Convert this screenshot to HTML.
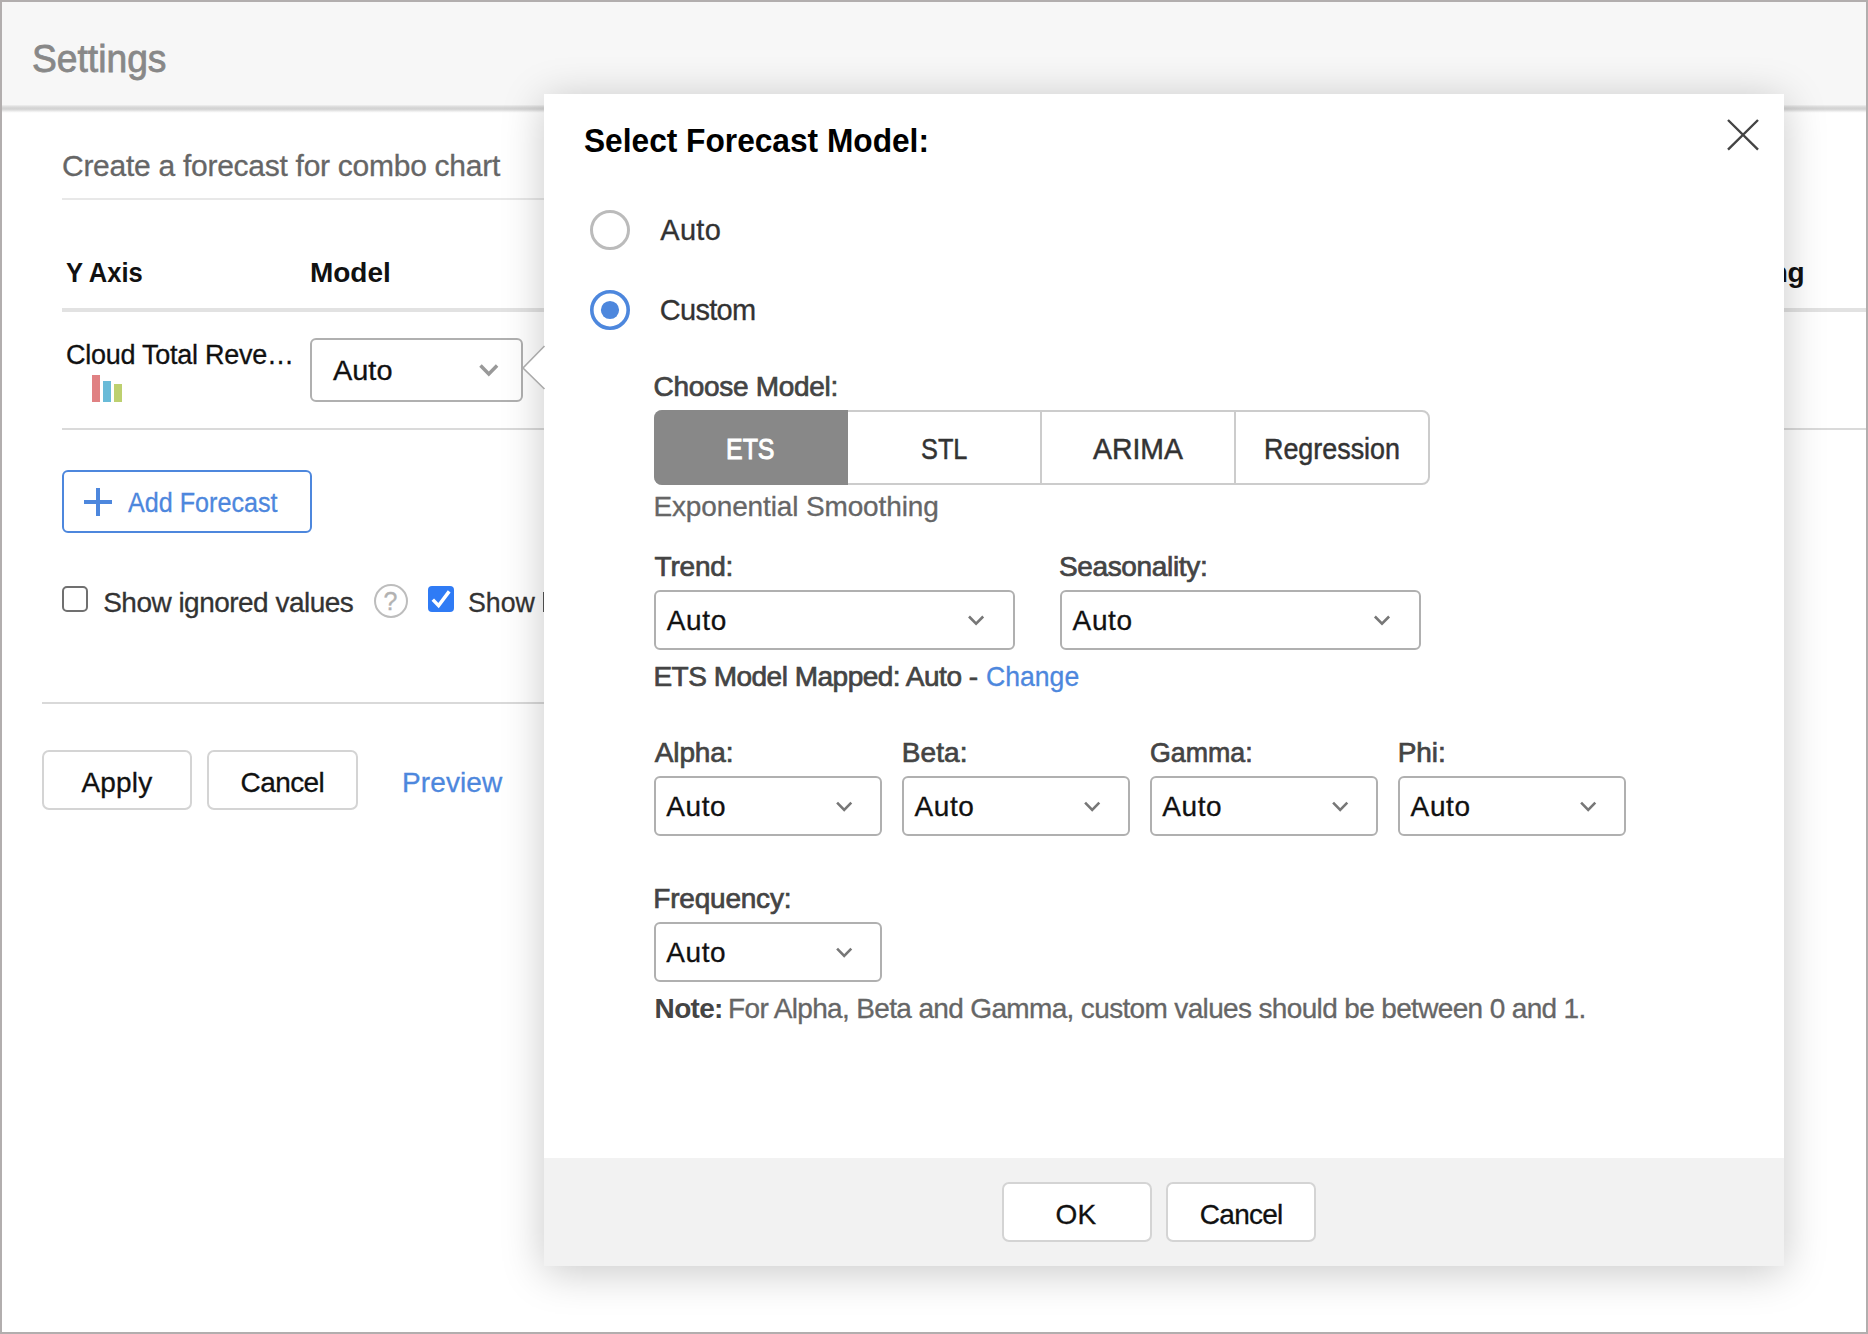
<!DOCTYPE html>
<html><head><meta charset="utf-8"><title>Settings - Select Forecast Model</title>
<style>
html,body{margin:0;padding:0;width:1868px;height:1334px;overflow:hidden;background:#fff}
body{position:relative;font-family:"Liberation Sans",sans-serif}
.b{position:absolute;display:block}
.t{position:absolute;white-space:nowrap;font-family:"Liberation Sans",sans-serif}
</style></head><body>
<div id="settings">
<div class="b" style="left:0px;top:0px;width:1868px;height:1334px;border:2px solid #b2aeae;box-sizing:border-box;background:#fff"></div>
<div class="b" style="left:2px;top:2px;width:1864px;height:104px;background:#f7f7f7"></div>
<div class="b" style="left:2px;top:105px;width:1864px;height:8px;background:linear-gradient(#f0f0f0 0%,#d9d9d9 25%,#d2d2d2 50%,#e6e6e6 72%,#f8f8f8 88%,#ffffff 100%)"></div>
<div class="b" style="left:62px;top:198px;width:1600px;height:2px;background:#e8e8e8"></div>
<div class="b" style="left:62px;top:308px;width:1804px;height:4px;background:#e2e2e2"></div>
<div class="b" style="left:62px;top:428px;width:1804px;height:2px;background:#dadada"></div>
<div class="b" style="left:42px;top:702px;width:1740px;height:2px;background:#d9d9d9"></div>
<div class="b" style="left:92px;top:375px;width:8px;height:27px;background:#e08183"></div>
<div class="b" style="left:103px;top:381px;width:8px;height:21px;background:#69bbd8"></div>
<div class="b" style="left:114px;top:384px;width:8px;height:18px;background:#bdd06f"></div>
<div class="b" style="left:310px;top:338px;width:213px;height:64px;border:2px solid #b0b0b0;border-radius:6px;background:#fff;box-sizing:border-box"></div>
<svg class="b" style="left:475px;top:360px" width="29" height="21"><polyline points="5.50,5.60 13.80,14.00 22.10,5.60" fill="none" stroke="#999" stroke-width="3.5" stroke-linecap="butt" stroke-linejoin="miter"/></svg>
<div class="b" style="left:62px;top:470px;width:250px;height:63px;border:2px solid #4d87dd;border-radius:6px;background:#fff;box-sizing:border-box"></div>
<div class="b" style="left:84px;top:500px;width:28px;height:4px;background:#4d87dd"></div>
<div class="b" style="left:96px;top:488px;width:4px;height:28px;background:#4d87dd"></div>
<div class="b" style="left:62px;top:586px;width:26px;height:26px;border:2px solid #707070;border-radius:5px;box-sizing:border-box"></div>
<div class="b" style="left:374px;top:584px;width:34px;height:34px;border:2px solid #bdbdbd;border-radius:50%;box-sizing:border-box"></div>
<div class="t" style="left:383.5px;top:589px;font-size:25px;line-height:25px;color:#b2b2b2;-webkit-text-stroke:0.3px #b2b2b2">?</div>
<div class="b" style="left:428px;top:586px;width:26px;height:26px;background:#2f7bf5;border-radius:4px"></div>
<svg class="b" style="left:428px;top:586px" width="26" height="26"><polyline points="4.8,13.6 10.6,19.6 21.2,5.4" fill="none" stroke="#fff" stroke-width="3.5"/></svg>
<div class="b" style="left:542.6px;top:591.5px;width:1.8px;height:20.2px;background:#555"></div>
<div class="b" style="left:42px;top:750px;width:150px;height:60px;border:2px solid #d4d4d4;border-radius:7px;background:#fff;box-sizing:border-box"></div>
<div class="b" style="left:207px;top:750px;width:151px;height:60px;border:2px solid #d4d4d4;border-radius:7px;background:#fff;box-sizing:border-box"></div>
<div class="t" style="left:32.0px;top:39.0px;font-size:39px;line-height:39px;color:#888888;transform:scaleX(0.9540);transform-origin:0 0;-webkit-text-stroke:0.8px #888888">Settings</div>
<div class="t" style="left:62.0px;top:151.0px;font-size:30px;line-height:30px;color:#666;letter-spacing:-0.27px;-webkit-text-stroke:0.3px #666">Create a forecast for combo chart</div>
<div class="t" style="left:66.4px;top:259.0px;font-size:28px;line-height:28px;color:#111;font-weight:700;transform:scaleX(0.9126);transform-origin:0 0">Y Axis</div>
<div class="t" style="left:310.0px;top:259.0px;font-size:28px;line-height:28px;color:#111;font-weight:700;letter-spacing:-0.03px">Model</div>
<div class="t" style="left:1707.9px;top:259.0px;font-size:28px;line-height:28px;color:#111;font-weight:700;letter-spacing:-0.40px">Trailing</div>
<div class="t" style="left:66.0px;top:342.0px;font-size:27px;line-height:27px;color:#111;letter-spacing:-0.25px;-webkit-text-stroke:0.3px #111">Cloud Total Reve…</div>
<div class="t" style="left:332.6px;top:357.5px;font-size:27px;line-height:27px;color:#111;transform:scaleX(1.0710);transform-origin:0 0;-webkit-text-stroke:0.3px #111">Auto</div>
<div class="t" style="left:128.0px;top:490.2px;font-size:27px;line-height:27px;color:#4d87dd;transform:scaleX(0.9312);transform-origin:0 0;-webkit-text-stroke:0.3px #4d87dd">Add Forecast</div>
<div class="t" style="left:103.2px;top:589.0px;font-size:28px;line-height:28px;color:#333;letter-spacing:-0.52px;-webkit-text-stroke:0.3px #333">Show ignored values</div>
<div class="t" style="left:468.0px;top:589.0px;font-size:28px;line-height:28px;color:#333;transform:scaleX(0.9553);transform-origin:0 0;-webkit-text-stroke:0.3px #333">Show</div>
<div class="t" style="left:81.4px;top:769.0px;font-size:28px;line-height:28px;color:#111;letter-spacing:0.21px;-webkit-text-stroke:0.3px #111">Apply</div>
<div class="t" style="left:240.5px;top:769.0px;font-size:28px;line-height:28px;color:#111;letter-spacing:-0.57px;-webkit-text-stroke:0.3px #111">Cancel</div>
<div class="t" style="left:402.0px;top:769.0px;font-size:28px;line-height:28px;color:#4d87dd;letter-spacing:0.11px;-webkit-text-stroke:0.3px #4d87dd">Preview</div>
</div>
<div id="dialog">
<div class="b" style="left:544px;top:94px;width:1240px;height:1172px;background:#fff;box-shadow:0 6px 40px rgba(0,0,0,0.22)"></div>
<div class="b" style="left:544px;top:1158px;width:1240px;height:108px;background:#f2f2f2"></div>
<svg class="b" style="left:520px;top:342px" width="26" height="52"><polygon points="24.5,4 3,26 24.5,47 27,47 27,4" fill="#fff"/><polyline points="24.5,4 3,26 24.5,47" fill="none" stroke="#aaa" stroke-width="1.6"/></svg>
<svg class="b" style="left:1720px;top:112px" width="46" height="46"><path d="M8,8 L38,37.6 M38,8 L8,37.6" stroke="#444" stroke-width="2.4" fill="none"/></svg>
<svg class="b" style="left:586px;top:206px" width="48" height="128"><circle cx="24" cy="24" r="18.5" fill="#fff" stroke="#bbb" stroke-width="3"/><circle cx="24" cy="104" r="18.2" fill="#fff" stroke="#4d87dd" stroke-width="3.6"/><circle cx="24" cy="104" r="9.1" fill="#4d87dd"/></svg>
<div class="b" style="left:654px;top:410px;width:776px;height:75px;border:2px solid #ccc;border-radius:8px;box-sizing:border-box;background:#fff"></div>
<div class="b" style="left:654px;top:410px;width:194px;height:75px;background:#888;border-radius:8px 0 0 8px"></div>
<div class="b" style="left:1040px;top:410px;width:2px;height:75px;background:#ccc"></div>
<div class="b" style="left:1234px;top:410px;width:2px;height:75px;background:#ccc"></div>
<div class="b" style="left:654px;top:590px;width:361px;height:60px;border:2px solid #b0b0b0;border-radius:6px;background:#fff;box-sizing:border-box"></div>
<svg class="b" style="left:964px;top:611px" width="27" height="20"><polyline points="5.00,5.50 12.10,12.60 19.20,5.50" fill="none" stroke="#777" stroke-width="2.6" stroke-linecap="butt" stroke-linejoin="miter"/></svg>
<div class="b" style="left:1060px;top:590px;width:361px;height:60px;border:2px solid #b0b0b0;border-radius:6px;background:#fff;box-sizing:border-box"></div>
<svg class="b" style="left:1369px;top:611px" width="27" height="20"><polyline points="5.90,5.50 13.00,12.60 20.10,5.50" fill="none" stroke="#777" stroke-width="2.6" stroke-linecap="butt" stroke-linejoin="miter"/></svg>
<div class="b" style="left:654px;top:776px;width:228px;height:60px;border:2px solid #b0b0b0;border-radius:6px;background:#fff;box-sizing:border-box"></div>
<svg class="b" style="left:832px;top:797px" width="27" height="20"><polyline points="5.10,5.70 12.20,12.80 19.30,5.70" fill="none" stroke="#777" stroke-width="2.6" stroke-linecap="butt" stroke-linejoin="miter"/></svg>
<div class="b" style="left:902px;top:776px;width:228px;height:60px;border:2px solid #b0b0b0;border-radius:6px;background:#fff;box-sizing:border-box"></div>
<svg class="b" style="left:1080px;top:797px" width="27" height="20"><polyline points="5.10,5.70 12.20,12.80 19.30,5.70" fill="none" stroke="#777" stroke-width="2.6" stroke-linecap="butt" stroke-linejoin="miter"/></svg>
<div class="b" style="left:1150px;top:776px;width:228px;height:60px;border:2px solid #b0b0b0;border-radius:6px;background:#fff;box-sizing:border-box"></div>
<svg class="b" style="left:1328px;top:797px" width="27" height="20"><polyline points="5.10,5.70 12.20,12.80 19.30,5.70" fill="none" stroke="#777" stroke-width="2.6" stroke-linecap="butt" stroke-linejoin="miter"/></svg>
<div class="b" style="left:1398px;top:776px;width:228px;height:60px;border:2px solid #b0b0b0;border-radius:6px;background:#fff;box-sizing:border-box"></div>
<svg class="b" style="left:1576px;top:797px" width="27" height="20"><polyline points="5.10,5.70 12.20,12.80 19.30,5.70" fill="none" stroke="#777" stroke-width="2.6" stroke-linecap="butt" stroke-linejoin="miter"/></svg>
<div class="b" style="left:654px;top:922px;width:228px;height:60px;border:2px solid #b0b0b0;border-radius:6px;background:#fff;box-sizing:border-box"></div>
<svg class="b" style="left:832px;top:943px" width="27" height="20"><polyline points="5.10,5.70 12.20,12.80 19.30,5.70" fill="none" stroke="#777" stroke-width="2.6" stroke-linecap="butt" stroke-linejoin="miter"/></svg>
<div class="b" style="left:1002px;top:1182px;width:150px;height:60px;border:2px solid #d4d4d4;border-radius:7px;background:#fff;box-sizing:border-box"></div>
<div class="b" style="left:1166px;top:1182px;width:150px;height:60px;border:2px solid #d4d4d4;border-radius:7px;background:#fff;box-sizing:border-box"></div>
<div class="t" style="left:584.2px;top:123.0px;font-size:34px;line-height:34px;color:#000;font-weight:700;transform:scaleX(0.9315);transform-origin:0 0">Select Forecast Model:</div>
<div class="t" style="left:660.3px;top:216.0px;font-size:29px;line-height:29px;color:#333;letter-spacing:0.29px;-webkit-text-stroke:0.3px #333">Auto</div>
<div class="t" style="left:659.8px;top:296.0px;font-size:29px;line-height:29px;color:#333;letter-spacing:-0.71px;-webkit-text-stroke:0.3px #333">Custom</div>
<div class="t" style="left:653.6px;top:373.0px;font-size:28px;line-height:28px;color:#444;letter-spacing:-0.30px;-webkit-text-stroke:0.7px #444">Choose Model:</div>
<div class="t" style="left:725.7px;top:433.5px;font-size:30px;line-height:30px;color:#fff;transform:scaleX(0.8313);transform-origin:0 0;-webkit-text-stroke:1.0px #fff">ETS</div>
<div class="t" style="left:920.8px;top:433.5px;font-size:30px;line-height:30px;color:#333;transform:scaleX(0.8437);transform-origin:0 0;-webkit-text-stroke:0.5px #333">STL</div>
<div class="t" style="left:1093.2px;top:433.5px;font-size:30px;line-height:30px;color:#333;transform:scaleX(0.9453);transform-origin:0 0;-webkit-text-stroke:0.5px #333">ARIMA</div>
<div class="t" style="left:1264.2px;top:433.5px;font-size:30px;line-height:30px;color:#333;transform:scaleX(0.8963);transform-origin:0 0;-webkit-text-stroke:0.5px #333">Regression</div>
<div class="t" style="left:653.4px;top:493.0px;font-size:28px;line-height:28px;color:#666;letter-spacing:-0.13px;-webkit-text-stroke:0.3px #666">Exponential Smoothing</div>
<div class="t" style="left:654.6px;top:553.4px;font-size:28px;line-height:28px;color:#444;letter-spacing:-0.22px;-webkit-text-stroke:0.7px #444">Trend:</div>
<div class="t" style="left:1058.9px;top:553.4px;font-size:28px;line-height:28px;color:#444;letter-spacing:-0.34px;-webkit-text-stroke:0.7px #444">Seasonality:</div>
<div class="t" style="left:666.8px;top:606.5px;font-size:28px;line-height:28px;color:#111;letter-spacing:0.62px;-webkit-text-stroke:0.3px #111">Auto</div>
<div class="t" style="left:1072.6px;top:606.5px;font-size:28px;line-height:28px;color:#111;letter-spacing:0.62px;-webkit-text-stroke:0.3px #111">Auto</div>
<div class="t" style="left:653.4px;top:662.6px;font-size:28px;line-height:28px;color:#444;letter-spacing:-0.50px;-webkit-text-stroke:0.7px #444">ETS Model Mapped: Auto -</div>
<div class="t" style="left:986.0px;top:662.6px;font-size:28px;line-height:28px;color:#4d87dd;transform:scaleX(0.9502);transform-origin:0 0;-webkit-text-stroke:0.3px #4d87dd">Change</div>
<div class="t" style="left:654.7px;top:739.0px;font-size:28px;line-height:28px;color:#444;letter-spacing:-0.10px;-webkit-text-stroke:0.7px #444">Alpha:</div>
<div class="t" style="left:901.7px;top:739.0px;font-size:28px;line-height:28px;color:#444;letter-spacing:0.13px;-webkit-text-stroke:0.7px #444">Beta:</div>
<div class="t" style="left:1150.0px;top:739.0px;font-size:28px;line-height:28px;color:#444;transform:scaleX(0.9563);transform-origin:0 0;-webkit-text-stroke:0.7px #444">Gamma:</div>
<div class="t" style="left:1397.7px;top:739.0px;font-size:28px;line-height:28px;color:#444;letter-spacing:-0.06px;-webkit-text-stroke:0.7px #444">Phi:</div>
<div class="t" style="left:666.2px;top:792.7px;font-size:28px;line-height:28px;color:#111;letter-spacing:0.62px;-webkit-text-stroke:0.3px #111">Auto</div>
<div class="t" style="left:914.4px;top:792.7px;font-size:28px;line-height:28px;color:#111;letter-spacing:0.62px;-webkit-text-stroke:0.3px #111">Auto</div>
<div class="t" style="left:1162.2px;top:792.7px;font-size:28px;line-height:28px;color:#111;letter-spacing:0.62px;-webkit-text-stroke:0.3px #111">Auto</div>
<div class="t" style="left:1410.6px;top:792.7px;font-size:28px;line-height:28px;color:#111;letter-spacing:0.62px;-webkit-text-stroke:0.3px #111">Auto</div>
<div class="t" style="left:653.3px;top:885.2px;font-size:28px;line-height:28px;color:#444;letter-spacing:-0.21px;-webkit-text-stroke:0.7px #444">Frequency:</div>
<div class="t" style="left:666.2px;top:939.0px;font-size:28px;line-height:28px;color:#111;letter-spacing:0.62px;-webkit-text-stroke:0.3px #111">Auto</div>
<div class="t" style="left:654.6px;top:994.7px;font-size:28px;line-height:28px;color:#444;font-weight:700;letter-spacing:-0.68px">Note:</div>
<div class="t" style="left:728.0px;top:994.7px;font-size:28px;line-height:28px;color:#666;letter-spacing:-0.65px;-webkit-text-stroke:0.3px #666">For Alpha, Beta and Gamma, custom values should be between 0 and 1.</div>
<div class="t" style="left:1055.4px;top:1201.0px;font-size:28px;line-height:28px;color:#111;letter-spacing:0.32px;-webkit-text-stroke:0.3px #111">OK</div>
<div class="t" style="left:1199.8px;top:1201.0px;font-size:28px;line-height:28px;color:#111;letter-spacing:-0.73px;-webkit-text-stroke:0.3px #111">Cancel</div>
</div>
</body></html>
